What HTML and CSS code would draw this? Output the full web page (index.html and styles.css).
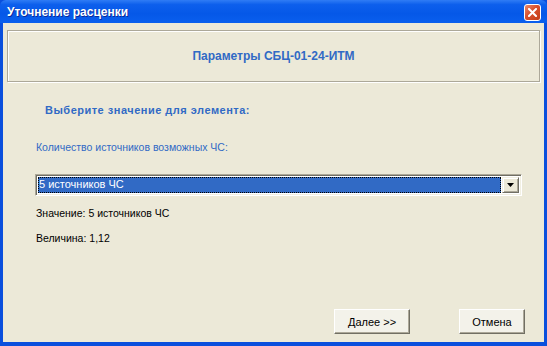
FILE: index.html
```html
<!DOCTYPE html>
<html lang="ru">

<head>
    <meta charset="UTF-8">
    <meta name="viewport" content="width=device-width, initial-scale=1.0">
    <title>Уточнение расценки</title>
    <link rel="stylesheet" href="styles.css">
</head>

<body>
    <div class="window">

        <!-- Title bar -->
        <div class="titlebar">
            <span class="title">Уточнение расценки</span>
            <span class="close">
                <svg width="9" height="9" viewBox="0 0 9 9">
                    <path d="M1 1 L8 8 M8 1 L1 8" stroke="#fff" stroke-width="2" stroke-linecap="square" />
                </svg>
            </span>
        </div>
        <!-- Title bar -->

        <div class="content">
            <div class="panel">
                <span>Параметры СБЦ-01-24-ИТМ</span>
            </div>

            <p class="heading">Выберите значение для элемента:</p>
            <p class="label">Количество источников возможных ЧС:</p>

            <!-- Combo box -->
            <div class="combo">
                <div class="combo-value">5 источников ЧС</div>
                <div class="combo-btn">
                    <svg width="7" height="4" viewBox="0 0 7 4">
                        <path d="M0 0 H7 L3.5 4 Z" fill="#000" />
                    </svg>
                </div>
            </div>
            <!-- Combo box -->

            <p class="info first">Значение: 5 источников ЧС</p>
            <p class="info">Величина: 1,12</p>

            <div class="footer">
                <button class="btn next">Далее &gt;&gt;</button>
                <button class="btn cancel">Отмена</button>
            </div>
        </div>

    </div>
</body>

</html>
```

FILE: styles.css
```css
html,
body {
    margin: 0;
    padding: 0;
}

body {
    font-family: "Liberation Sans", Arial, sans-serif;
    font-size: 11px;
}

.window {
    width: 547px;
    height: 346px;
    display: flex;
    flex-direction: column;
    background: #0a4fdd;
}

.titlebar {
    height: 23px;
    flex: none;
    display: flex;
    align-items: center;
    justify-content: space-between;
    padding: 0 5px 0 7px;
    background: linear-gradient(#2f7cf5 0%, #0d5fec 20%, #0558e8 60%, #0a5fee 100%);
    border-radius: 6px 6px 0 0;
}

.title {
    color: #fff;
    font-weight: bold;
    font-size: 12px;
    text-shadow: 1px 1px 0 #0a2a9a;
    padding-top: 1px;
}

.close {
    width: 15px;
    height: 15px;
    margin-top: 2px;
    margin-right: 1px;
    display: flex;
    align-items: center;
    justify-content: center;
    border: 1px solid #fff;
    border-radius: 3px;
    background: linear-gradient(135deg, #e98a6c 0%, #d9502d 45%, #c23d16 100%);
}

.content {
    flex: 1;
    display: flex;
    flex-direction: column;
    margin: 0 3px 4px 3px;
    background: #ece9d8;
}

.panel {
    margin: 7px 0 0 4px;
    width: 533px;
    height: 52px;
    box-sizing: border-box;
    border: 1px solid #aca899;
    box-shadow: inset 1px 1px 0 #fff, 1px 1px 0 #fff;
    display: flex;
    align-items: center;
    justify-content: center;
    color: #316ac5;
    font-weight: bold;
    font-size: 12px;
}

p {
    margin: 0;
    line-height: 14px;
}

.heading {
    margin: 21px 0 0 42px;
    color: #316ac5;
    font-weight: bold;
    font-size: 11px;
    letter-spacing: 0.5px;
}

.label {
    margin: 23px 0 0 33px;
    color: #316ac5;
    font-size: 10.5px;
}

.combo {
    margin: 20px 0 0 32px;
    width: 487px;
    height: 22px;
    box-sizing: border-box;
    display: flex;
    padding: 2px;
    background: #fff;
    border-top: 1px solid #aca899;
    border-left: 1px solid #aca899;
    border-right: 1px solid #fff;
    border-bottom: 1px solid #fff;
    box-shadow: inset 1px 1px 0 #716f64, inset -1px -1px 0 #f1efe2;
}

.combo-value {
    flex: 1;
    margin: 0 1px 0 0;
    background: #316ac5;
    color: #fff;
    line-height: 14px;
    padding: 0 1px;
    outline: 1px dotted #000;
    outline-offset: -1px;
}

.combo-btn {
    width: 17px;
    box-sizing: border-box;
    background: #ece9d8;
    border-top: 1px solid #f1efe2;
    border-left: 1px solid #f1efe2;
    border-right: 1px solid #716f64;
    border-bottom: 1px solid #716f64;
    box-shadow: inset 1px 1px 0 #fff, inset -1px -1px 0 #aca899;
    display: flex;
    align-items: center;
    justify-content: center;
}

.info {
    margin: 11px 0 0 33px;
    color: #000;
    font-size: 10.5px;
}

.info.first {
    margin-top: 10px;
}

.footer {
    margin-top: auto;
    display: flex;
    justify-content: flex-end;
    gap: 49px;
    padding: 0 19px 8px 0;
}

.btn {
    height: 25px;
    box-sizing: border-box;
    font-family: "Liberation Sans", Arial, sans-serif;
    font-size: 11px;
    color: #000;
    background: #f3f2ea;
    border-top: 1px solid #fff;
    border-left: 1px solid #fff;
    border-right: 1px solid #716f64;
    border-bottom: 1px solid #716f64;
    box-shadow: inset -1px -1px 0 #aca899;
    padding: 0;
}

.next {
    width: 76px;
}

.cancel {
    width: 66px;
}
```
